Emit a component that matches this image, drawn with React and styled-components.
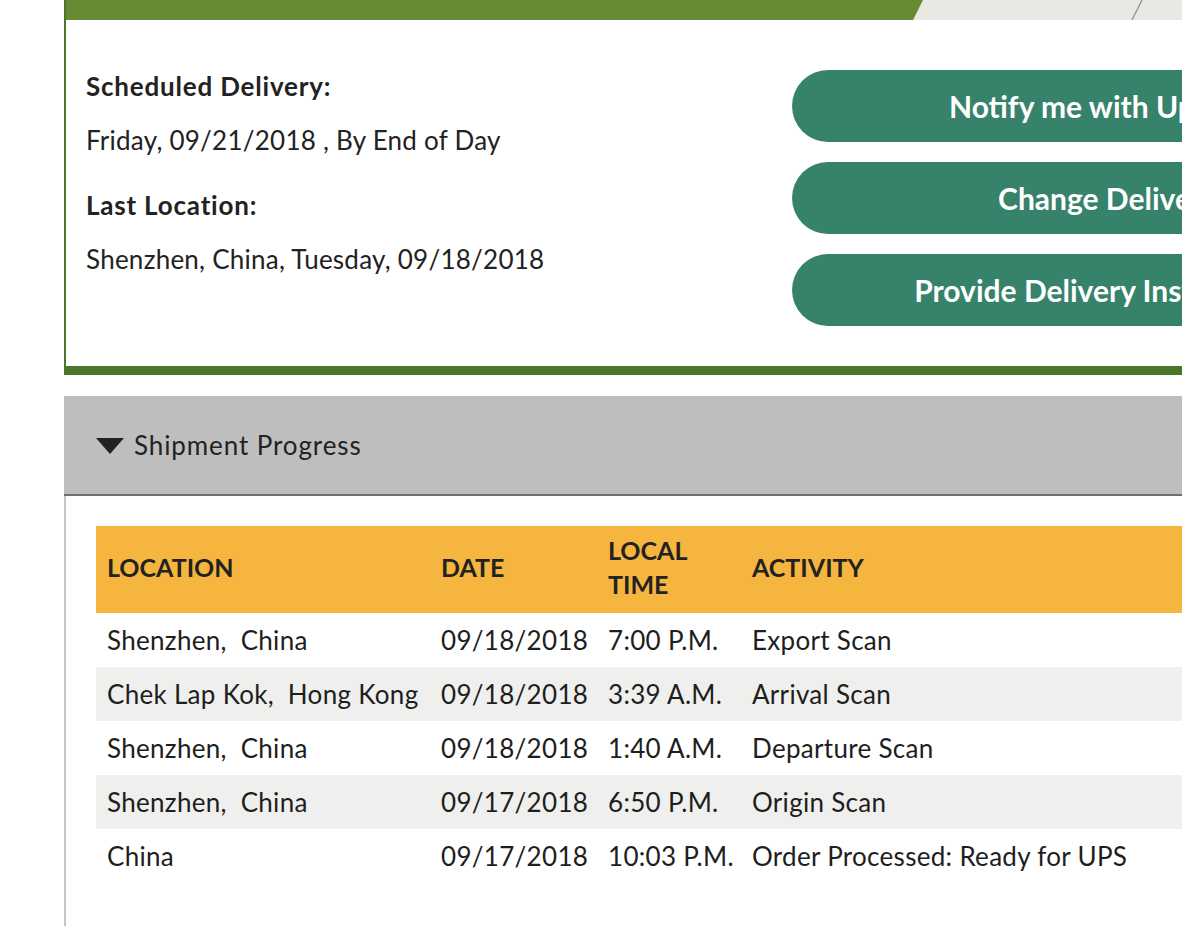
import React from "react";
import styled, { createGlobalStyle } from "styled-components";

const Global = createGlobalStyle`
  html, body { margin: 0; padding: 0; background: #fff; }
  body { font-family: Lato, "Noto Sans", sans-serif; color: #222; overflow: hidden; }
`;

const Viewport = styled.div`
  width: 1182px;
  height: 926px;
  overflow: hidden;
`;

const Column = styled.div`
  margin-left: 64px;
  width: 1400px;
  display: flex;
  flex-direction: column;
`;

const Card = styled.section`
  border-left: 2px solid #4b7629;
  border-bottom: 9px solid #4b7629;
  display: flex;
  flex-direction: column;
`;

const Band = styled.div`
  height: 20px;
  display: flex;
  background: #e9e9e4;
`;

const BandTab = styled.div`
  width: 857px;
  background: #678b32;
  clip-path: polygon(0 0, 100% 0, calc(100% - 10px) 100%, 0 100%);
`;

const BandRest = styled.div`
  flex: 1;
  position: relative;
`;

const BandStroke = styled.svg`
  position: absolute;
  left: 200px;
  top: 0;
`;

const CardBody = styled.div`
  display: flex;
  padding: 50px 0 40px 20px;
`;

const Info = styled.div`
  width: 706px;
  display: flex;
  flex-direction: column;
`;

const Label = styled.div`
  font-weight: 700;
  font-size: 26px;
  letter-spacing: 0.8px;
  line-height: 34px;
  margin-top: ${(p) => p.$mt || -1}px;
`;

const Value = styled.div`
  font-size: 26px;
  letter-spacing: 0.25px;
  line-height: 34px;
  margin-top: 20px;
`;

const Buttons = styled.div`
  display: flex;
  flex-direction: column;
  gap: 20px;
`;

const PillButton = styled.button`
  width: 632px;
  height: 72px;
  border: 0;
  border-radius: 36px;
  background: #37826a;
  color: #fff;
  font-family: Lato, "Noto Sans", sans-serif;
  font-weight: 700;
  font-size: 30px;
  display: flex;
  align-items: center;
  justify-content: center;
  padding: 0;
`;

const Progress = styled.section`
  margin-top: 21px;
  display: flex;
  flex-direction: column;
`;

const ProgressHeader = styled.div`
  height: 98px;
  background: #bebebe;
  border-bottom: 2px solid #6f6f6f;
  display: flex;
  align-items: center;
  padding-left: 32px;
  gap: 10px;
  font-size: 26px;
  letter-spacing: 0.9px;
  color: #222;
`;

const Caret = styled.span`
  width: 0;
  height: 0;
  border-left: 14px solid transparent;
  border-right: 14px solid transparent;
  border-top: 16px solid #222;
  margin-top: 2px;
`;

const ProgressBody = styled.div`
  border-left: 2px solid #c6c6c6;
  padding: 30px 0 60px 30px;
`;

const Table = styled.table`
  border-collapse: collapse;
  width: 1200px;
  table-layout: fixed;
`;

const Th = styled.th`
  background: #f6b53f;
  text-align: left;
  font-weight: 700;
  font-size: 25px;
  line-height: 34px;
  text-transform: uppercase;
  color: #222;
  padding: 0 0 5px 11px;
  height: 82px;
  vertical-align: middle;
`;

const Tr = styled.tr`
  background: ${(p) => (p.$alt ? "#efefed" : "#fff")};
`;

const Td = styled.td`
  font-size: 26px;
  letter-spacing: 0.3px;
  height: 54px;
  padding: 0 0 0 11px;
  white-space: pre;
  color: #1e1e1e;
  vertical-align: middle;
`;

const rows = [
  ["Shenzhen,  China", "09/18/2018", "7:00 P.M.", "Export Scan"],
  ["Chek Lap Kok,  Hong Kong", "09/18/2018", "3:39 A.M.", "Arrival Scan"],
  ["Shenzhen,  China", "09/18/2018", "1:40 A.M.", "Departure Scan"],
  ["Shenzhen,  China", "09/17/2018", "6:50 P.M.", "Origin Scan"],
  ["China", "09/17/2018", "10:03 P.M.", "Order Processed: Ready for UPS"],
];

export default function App() {
  return (
    <Viewport>
      <Global />
      <Column>
        <Card>
          <Band>
            <BandTab />
            <BandRest>
              <BandStroke width="24" height="20">
                <line x1="19" y1="0" x2="9" y2="20" stroke="#9a9a94" strokeWidth="1.5" />
              </BandStroke>
            </BandRest>
          </Band>
          <CardBody>
            <Info>
              <Label>Scheduled Delivery:</Label>
              <Value>Friday, 09/21/2018 , By End of Day</Value>
              <Label $mt={31}>Last Location:</Label>
              <Value>Shenzhen, China, Tuesday, 09/18/2018</Value>
            </Info>
            <Buttons>
              <PillButton>Notify me with Updates</PillButton>
              <PillButton>Change Delivery</PillButton>
              <PillButton>Provide Delivery Instructions</PillButton>
            </Buttons>
          </CardBody>
        </Card>
        <Progress>
          <ProgressHeader>
            <Caret />
            Shipment Progress
          </ProgressHeader>
          <ProgressBody>
            <Table>
              <colgroup>
                <col style={{ width: 334 }} />
                <col style={{ width: 167 }} />
                <col style={{ width: 144 }} />
                <col />
              </colgroup>
              <thead>
                <tr>
                  <Th>Location</Th>
                  <Th>Date</Th>
                  <Th>Local Time</Th>
                  <Th>Activity</Th>
                </tr>
              </thead>
              <tbody>
                {rows.map((r, i) => (
                  <Tr key={i} $alt={i % 2 === 1}>
                    {r.map((c, j) => (
                      <Td key={j}>{c}</Td>
                    ))}
                  </Tr>
                ))}
              </tbody>
            </Table>
          </ProgressBody>
        </Progress>
      </Column>
    </Viewport>
  );
}
